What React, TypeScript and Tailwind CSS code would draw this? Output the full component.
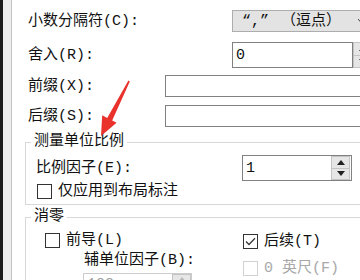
import React from 'react';

const font = "font-['Liberation_Mono','Noto_Sans_CJK_SC',monospace]";

function Box({ checked, disabled }: { checked?: boolean; disabled?: boolean }) {
  return (
    <span
      className={`flex h-[15px] w-[15px] shrink-0 items-center justify-center border bg-white ${
        disabled ? 'border-[#d2d2d2]' : 'border-[#333333]'
      }`}
    >
      {checked && (
        <svg width="11" height="9" viewBox="0 0 11 9">
          <path d="M1 4.5 L4 7.5 L10 1.2" fill="none" stroke="#3a3a3a" strokeWidth="1.3" />
        </svg>
      )}
    </span>
  );
}

function Spinner({ disabled }: { disabled?: boolean }) {
  const c = disabled ? '#b8b8b8' : '#222';
  return (
    <div className="flex h-full w-[19px] shrink-0 flex-col border border-[#c4c4c4] bg-[#e6e6e6]">
      <div className="flex flex-1 items-center justify-center border-b border-[#c4c4c4]">
        <svg width="8" height="5" viewBox="0 0 8 5">
          <path d="M0 5 L4 0 L8 5 Z" fill={c} />
        </svg>
      </div>
      <div className="flex flex-1 items-center justify-center">
        <svg width="8" height="5" viewBox="0 0 8 5">
          <path d="M0 0 L8 0 L4 5 Z" fill={c} />
        </svg>
      </div>
    </div>
  );
}

export default function App() {
  return (
    <div className={`relative flex h-[280px] w-[360px] overflow-hidden bg-white text-[15px] leading-none text-[#111] ${font}`}>
      {/* window edge */}
      <div className="w-[3px] shrink-0 bg-[#1a1a1a]" />
      <div className="w-[8px] shrink-0 bg-[#ececec]" />
      <div className="w-[1px] shrink-0 bg-[#c2c2c2]" />

      <div className="flex w-[348px] shrink-0 flex-col">
        <div className="ml-[153px] h-[3px] w-[300px] bg-[#c6c6c6]" />

        <div className="mt-[10px] flex h-[22px] items-center">
          <div className="w-[220px] shrink-0 pl-[16px]">小数分隔符(C):</div>
          <div className="flex h-[22px] w-[135px] shrink-0 items-center border border-[#adadad] bg-[#e3e3e3] pl-[9px]">
            <span>“,”</span>
            <span className="ml-[12px]">（逗点）</span>
            <svg className="ml-auto mr-[1px]" width="7" height="4" viewBox="0 0 7 4">
              <path d="M0 0 L3.5 4 L7 0" fill="none" stroke="#444" strokeWidth="1" />
            </svg>
          </div>
        </div>

        <div className="mt-[10px] flex h-[26px] items-center">
          <div className="w-[220px] shrink-0 pl-[16px]">舍入(R):</div>
          <div className="flex h-[26px] w-[121px] shrink-0 items-center border border-[#808080] bg-white pl-[3px]">0</div>
          <Spinner />
        </div>

        <div className="mt-[7px] flex h-[22px] items-center">
          <div className="w-[153px] shrink-0 pl-[16px]">前缀(X):</div>
          <div className="h-[22px] w-[220px] shrink-0 border border-[#808080] bg-white" />
        </div>

        <div className="mt-[8px] flex h-[22px] items-center">
          <div className="w-[153px] shrink-0 pl-[16px]">后缀(S):</div>
          <div className="h-[22px] w-[220px] shrink-0 border border-[#808080] bg-white" />
        </div>

        <fieldset className="mt-[5px] ml-[13px] w-[400px] shrink-0 border-y border-l border-[#d8d8d8] pb-[5px]">
          <legend className="ml-[5px] px-[3px] leading-[20px]">测量单位比例</legend>
          <div className="mt-[3px] flex h-[26px] items-center">
            <div className="w-[216px] shrink-0 pl-[10px]">比例因子(E):</div>
            <div className="flex h-[26px] w-[110px] shrink-0 items-center border border-[#808080] bg-white pl-[3px] pr-[1px]">
              <span className="flex-1">1</span>
              <div className="h-[24px]">
                <Spinner />
              </div>
            </div>
          </div>
          <div className="mt-[3px] flex h-[15px] items-center gap-[6px] pl-[11px]">
            <Box />
            <span>仅应用到布局标注</span>
          </div>
        </fieldset>

        <fieldset className="mt-[2px] ml-[13px] w-[400px] shrink-0 border-y border-l border-[#d8d8d8] pb-[5px]">
          <legend className="ml-[5px] px-[3px] leading-[20px]">消零</legend>
          <div className="flex">
            <div className="flex w-[217px] shrink-0 flex-col">
              <div className="mt-[6px] flex h-[15px] items-center gap-[6px] pl-[19px]">
                <Box />
                <span>前导(L)</span>
              </div>
              <div className="mt-[4px] h-[17px] pl-[58px] leading-[17px]">辅单位因子(B):</div>
              <div className="mt-[4px] ml-[57px] flex h-[22px] w-[109px] items-center border border-[#cccccc] bg-white pl-[3px] text-[#a0a0a0]">
                <span className="flex-1">100</span>
                <Spinner disabled />
              </div>
            </div>
            <div className="flex flex-col">
              <div className="mt-[7px] flex h-[15px] items-center gap-[6px]">
                <Box checked />
                <span>后续(T)</span>
              </div>
              <div className="mt-[12px] flex h-[15px] items-center gap-[6px] text-[#a8a8a8]">
                <Box disabled />
                <span>0 英尺(F)</span>
              </div>
            </div>
          </div>
        </fieldset>
      </div>

      {/* red annotation arrow */}
      <svg className="pointer-events-none absolute left-0 top-0" width="360" height="280" viewBox="0 0 360 280">
        <polygon
          points="129.8,81.4 112.2,120.5 116.6,122.8 101,136 102.2,115.3 107.2,117.9 128.4,80.6"
          fill="#e8322b"
        />
      </svg>
    </div>
  );
}
